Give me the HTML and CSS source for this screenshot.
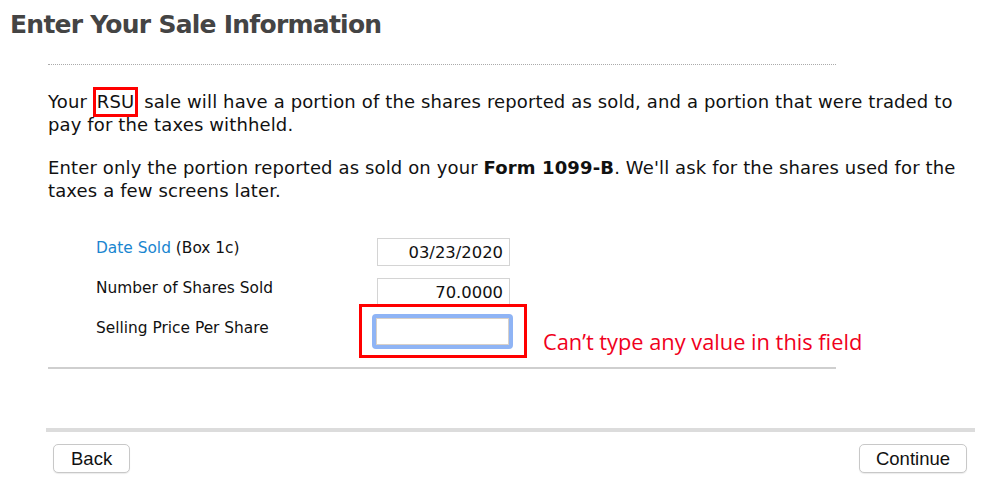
FILE: index.html
```html
<!DOCTYPE html>
<html>
<head>
<meta charset="utf-8">
<link rel="stylesheet" href="styles.css">
</head>
<body>
<div class="page">
  <h1 class="title">Enter Your Sale Information</h1>
  <div class="content">
    <div class="dots"></div>
    <p class="para">Your <span class="rsu">RSU</span> sale will have a portion of the shares reported as sold, and a portion that were traded to pay for the taxes withheld.</p>
    <p class="para">Enter only the portion reported as sold on your <b>Form 1099-B</b>. We'll ask for the shares used for the taxes a few screens later.</p>
    <div class="form">
      <div class="row">
        <div class="label"><span class="link">Date Sold</span> (Box 1c)</div>
        <div class="field">03/23/2020</div>
      </div>
      <div class="row">
        <div class="label">Number of Shares Sold</div>
        <div class="field">70.0000</div>
      </div>
      <div class="row row-focus">
        <div class="label">Selling Price Per Share</div>
        <div class="callout">
          <div class="focus-field"></div>
        </div>
        <div class="note">Can’t type any value in this field</div>
      </div>
    </div>
    <div class="rule"></div>
  </div>
  <div class="footer">
    <button class="btn btn-back">Back</button>
    <button class="btn">Continue</button>
  </div>
</div>
</body>
</html>
```
FILE: styles.css
```css
* { box-sizing: border-box; }
html, body { margin: 0; padding: 0; background: #fff; }
body {
  font-family: "DejaVu Sans", Verdana, sans-serif;
  color: #111;
  width: 999px;
  height: 493px;
  overflow: hidden;
}
.page { padding: 8px 0 0 0; }
.title {
  margin: 0 0 0 10px;
  font-size: 25px;
  font-weight: bold;
  color: #444;
  line-height: 34px;
  letter-spacing: -0.75px;
}
.content { padding: 0 0 0 48px; }
.dots {
  width: 788px;
  margin-top: 22px;
  border-top: 1px dotted #aaa;
}
.para {
  margin: 25px 0 0 0;
  font-size: 18px;
  letter-spacing: 0.13px;
  line-height: 23px;
  width: 925px;
}
.para + .para { margin-top: 20px; }
.rsu {
  display: inline-block;
  border: 3px solid #f00;
  padding: 1px 1px;
  margin: -5px 0;
  line-height: 22px;
}
.form { margin-top: 30px; }
.row {
  display: flex;
  align-items: center;
  height: 40px;
  padding-left: 48px;
}
.label {
  width: 281px;
  font-size: 15.4px;
  margin-top: -8px;
}
.row-focus .label { margin-top: -18px; }
.link { color: #1a86d0; }
.field {
  width: 133px;
  height: 28px;
  border: 1px solid #d4d4d4;
  text-align: right;
  font-size: 16.4px;
  line-height: 28px;
  padding-right: 6px;
  color: #111;
}
.row-focus { height: 53px; margin-top: -2px; }
.callout {
  margin-left: -18px;
  width: 168px;
  height: 54px;
  border: 3px solid #f00;
  display: flex;
  align-items: center;
  justify-content: center;
  margin-top: -12px;
}
.focus-field {
  width: 141px;
  height: 35px;
  border: 4px solid #8fb4f5;
  border-radius: 4px;
  background: #fff;
  margin-left: -1px;
  margin-top: 2px;
  box-shadow: inset 0 0 0 1px #d8d0c8;
}
.note {
  margin-left: 16px;
  font-family: "Open Sans", "DejaVu Sans", sans-serif;
  font-size: 21.8px;
  color: #f0001c;
  margin-top: 9px;
}
.rule {
  width: 788px;
  height: 2px;
  background: #cfcfcf;
  margin-top: 4px;
}
.footer {
  margin: 59px 24px 0 46px;
  border-top: 4px solid #dcdcdc;
  padding: 12px 8px 0 7px;
  display: flex;
  justify-content: space-between;
}
.btn {
  font-family: "Liberation Sans", Arial, sans-serif;
  font-size: 18.5px;
  color: #111;
  background: #fff;
  border: 1px solid #c8c8c8;
  border-radius: 5px;
  height: 29px;
  padding: 0 16px;
  box-shadow: 0 1px 1px rgba(0,0,0,0.08);
}
.btn-back { padding: 0 17px; }
```
